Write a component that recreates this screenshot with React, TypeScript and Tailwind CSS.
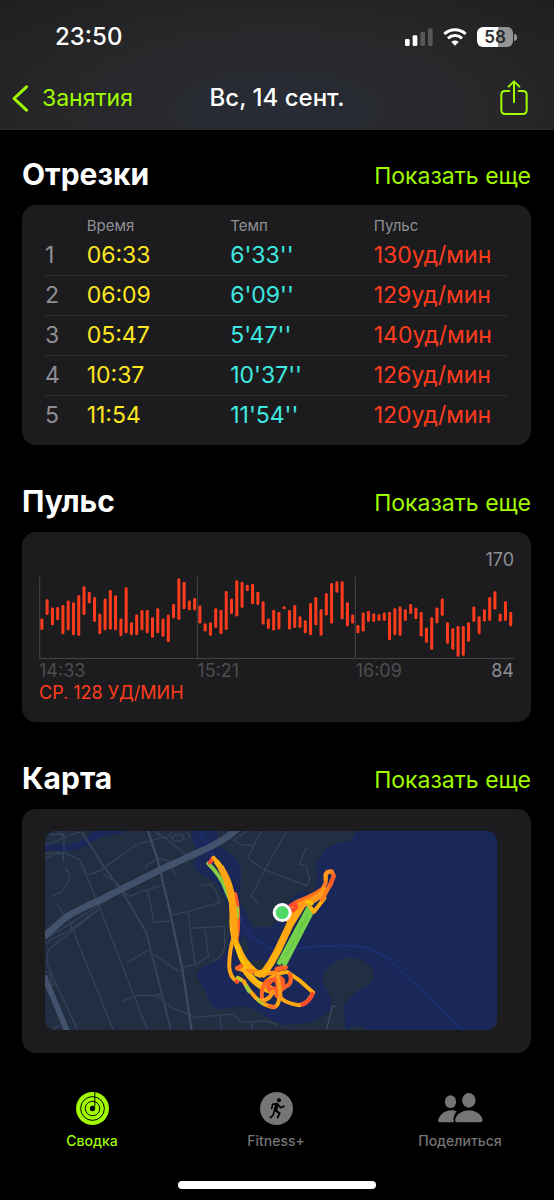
type Split = {
  time: string;
  pace: string;
  pulse: string;
};

const splits: Split[] = [
  { time: "06:33", pace: "6'33''", pulse: "130уд/мин" },
  { time: "06:09", pace: "6'09''", pulse: "129уд/мин" },
  { time: "05:47", pace: "5'47''", pulse: "140уд/мин" },
  { time: "10:37", pace: "10'37''", pulse: "126уд/мин" },
  { time: "11:54", pace: "11'54''", pulse: "120уд/мин" },
];

// top and bottom of each heart rate bar, in chart units
const pulseRanges = [
  [238, 272], [180, 227], [205, 258], [203, 243], [197, 285], [184, 273],
  [189, 288], [168, 290], [141, 227], [157, 192], [173, 248], [223, 285],
  [178, 273], [152, 271], [168, 273], [238, 291], [144, 282], [249, 288],
  [226, 288], [212, 273], [212, 282], [234, 296], [207, 282], [238, 293],
  [226, 309], [194, 237], [117, 242], [128, 210], [184, 213], [176, 213],
  [199, 253], [252, 277], [249, 290], [207, 266], [212, 285], [155, 272],
  [178, 224], [123, 232], [128, 206], [136, 155], [133, 195], [157, 197],
  [186, 256], [238, 269], [212, 274], [218, 271], [201, 210], [212, 271],
  [197, 266], [231, 266], [243, 282], [191, 288], [173, 258], [210, 290],
  [162, 229], [131, 253], [126, 160], [126, 240], [189, 261], [226, 253],
  [257, 282], [220, 277], [215, 248], [223, 248], [225, 245], [220, 245],
  [218, 303], [207, 288], [202, 290], [210, 245], [194, 224], [205, 240],
  [218, 292], [265, 311], [234, 332], [205, 252], [178, 230], [249, 314],
  [267, 332], [260, 353], [260, 350], [249, 308], [202, 248], [231, 285],
  [210, 247], [173, 245], [156, 211], [223, 247], [186, 245], [218, 261],
];

function StatusBar() {
  return (
    <div className="flex items-center justify-between pt-[22px] pr-[37px] pl-[55px] text-white">
      <span className="text-[24px] leading-[30px] font-medium">23:50</span>
      <div className="flex items-center gap-[10px]">
        <svg className="h-[18px] w-7" viewBox="0 0 84 54" aria-hidden="true">
          <rect x="0" y="33" width="14" height="21" rx="4" fill="#fff" />
          <rect x="23" y="22" width="14" height="32" rx="4" fill="#fff" />
          <rect x="46" y="12" width="14" height="42" rx="4" fill="#58585a" />
          <rect x="69" y="1" width="14" height="53" rx="4" fill="#58585a" />
        </svg>
        <svg className="h-[18px] w-6" viewBox="0 0 72 54" fill="none" aria-hidden="true">
          <path d="M4 18C22 1 50 1 68 18" stroke="#fff" strokeWidth="9" />
          <path d="M15 31C27 20 45 20 57 31" stroke="#fff" strokeWidth="9" />
          <path d="M25 42C31 36 41 36 47 42L36 53Z" fill="#fff" />
        </svg>
        <div className="flex items-center gap-px">
          <div className="h-5 w-9 rounded-md bg-linear-to-r from-white from-58% to-[#949495] to-58% text-center text-[17px] leading-5 font-semibold text-[#2a2a2c]">
            58
          </div>
          <div className="h-[7px] w-[3px] rounded-r-full bg-[#949495]" />
        </div>
      </div>
    </div>
  );
}

function Header() {
  return (
    <header className="h-[130px] border-b border-[#2c2c2e] bg-[radial-gradient(ellipse_at_50%_85%,#282c36_0%,#28282b_50%,#1f1f20_100%)]">
      <StatusBar />
      <div className="mt-[26px] grid grid-cols-[1fr_auto_1fr] items-center px-3">
        <button type="button" className="flex items-center gap-[14px] text-[23px] leading-10 text-[#a0fb00]">
          <svg className="h-[27px] w-4" viewBox="0 0 16 27" fill="none" aria-hidden="true">
            <path d="M14.500 1.800L2 13.500L14.500 25.200" stroke="currentColor" strokeWidth="3" strokeLinecap="round" strokeLinejoin="round" />
          </svg>
          Занятия
        </button>
        <h1 className="text-center text-[24px] leading-10 font-medium whitespace-nowrap text-white">
          Вс, 14 сент.
        </h1>
        <button type="button" aria-label="Поделиться" className="mr-[14px] justify-self-end text-[#a0fb00]">
          <svg className="h-9 w-7" viewBox="0 0 84 108" fill="none" stroke="currentColor" strokeWidth="6" strokeLinecap="round" strokeLinejoin="round" aria-hidden="true">
            <path d="M28 33H15Q4 33 4 44V91Q4 102 15 102H69Q80 102 80 91V44Q80 33 69 33H56" />
            <path d="M42 66V5M26 20L42 4L58 20" />
          </svg>
        </button>
      </div>
    </header>
  );
}

function SectionTitle({ title }: { title: string }) {
  return (
    <div className="mb-[11px] flex h-10 items-center justify-between">
      <h2 className="text-[30px] leading-10 font-bold text-white">{title}</h2>
      <button type="button" className="pt-1 text-[23px] leading-9 text-[#a0fb00]">
        Показать еще
      </button>
    </div>
  );
}

function SplitsCard() {
  return (
    <div className="rounded-[14px] bg-[#1c1c1e] px-[23px] pt-[11px] pb-[10px]">
      <table className="w-full table-fixed text-left">
        <thead>
          <tr className="h-[19px] text-[15px] leading-[19px] text-[#8e8e93]">
            <th className="w-[9%]" />
            <th className="w-[31%] font-normal">Время</th>
            <th className="w-[31%] font-normal">Темп</th>
            <th className="font-normal">Пульс</th>
          </tr>
        </thead>
        <tbody className="divide-y divide-[#2f2f31]">
          {splits.map((split, index) => (
            <tr key={split.time} className="h-10 text-[23px] leading-8">
              <td className="text-[#8e8e93]">{index + 1}</td>
              <td className="text-[#ffe620]">{split.time}</td>
              <td className="text-[#3ce8e0]">{split.pace}</td>
              <td className="whitespace-nowrap text-[#ff3b1d]">{split.pulse}</td>
            </tr>
          ))}
        </tbody>
      </table>
    </div>
  );
}

function PulseCard() {
  return (
    <div className="rounded-[14px] bg-[#1c1c1e] px-[17px] pt-[17px] pb-[18px] text-[18px] leading-[22px]">
      <p className="mb-[5px] text-right text-[#8e8e93]">170</p>
      <svg className="block w-full" viewBox="0 110 1428 252" aria-hidden="true">
        <path d="M2 112V358M476 112V358M951 112V358M1 358H1428" stroke="#454547" strokeWidth="3" fill="none" />
        {pulseRanges.map(([top, bottom], index) => (
          <rect
            key={index}
            x={4 + index * 15.84}
            y={top}
            width="9"
            height={bottom - top}
            rx="4"
            fill="#ff3b1d"
          />
        ))}
      </svg>
      <div className="grid grid-cols-3 text-[#4d4d50]">
        <span>14:33</span>
        <span>15:21</span>
        <span className="flex justify-between">
          16:09 <span className="text-[#8e8e93]">84</span>
        </span>
      </div>
      <p className="text-[#ff3b1d]">СР. 128 УД/МИН</p>
    </div>
  );
}

function RouteMap() {
  return (
    <svg className="block w-full rounded-[10px]" viewBox="75 78 1357 597" role="img" aria-label="Карта">
      <rect x="75" y="78" width="1357" height="597" fill="#222f42" />

      {/* water */}
      <g fill="#192859">
        <path d="M75 116C130 124 170 118 205 94L215 78H325C300 92 280 88 255 92C225 100 210 122 170 134C140 142 105 134 75 136Z" />
        <path d="M1432 78H1008L995 108L960 112L920 130L890 170L892 220L885 262L840 262L810 285L796 320L775 350L750 366H700L685 335L660 290L662 240L665 200C660 165 630 140 590 120L592 78H513L520 115L538 140L518 180C530 205 560 212 590 235C620 280 635 330 632 380C625 430 618 450 590 468C560 480 530 490 533 515C540 540 555 550 562 575C570 605 585 614 620 614C645 600 670 600 700 612L740 637L790 660L860 655L900 640L935 615L932 575L910 535C908 515 908 500 950 470C975 455 1010 455 1030 468C1050 480 1062 490 1062 515C1060 540 1025 545 1000 570C975 590 970 605 972 625L978 660L970 675H1432Z" />
      </g>
      <g fill="#222f42">
        <path d="M665 400Q675 392 681 410L684 440L672 452Q660 430 665 400Z" />
        <path d="M690 470Q710 462 738 468L735 495L700 500Z" />
        <path d="M990 675V664H1035V675Z" />
        <path d="M970 660L983 668L970 675Z" />
      </g>
      <path d="M545 78V95L590 165L625 210L650 300Q665 360 695 395L740 425L765 434L880 426L970 421L1042 428L1102 458L1328 675" fill="none" stroke="#1c3179" strokeWidth="4" />

      {/* roads */}
      <g fill="none" stroke="#33415a" strokeWidth="4" strokeLinejoin="round">
        <path d="M110 298L148 350L280 675" />
        <path d="M180 165L240 310L382 675" />
        <path d="M185 80L245 175L310 265L380 385L395 445L453 675" strokeWidth="6" />
        <path d="M75 145L128 142L180 165L200 208Q230 208 262 182L350 118L432 97L500 150" />
        <path d="M75 120L130 100L180 80M110 78L135 100M88 90L132 86V140M75 160L95 150M92 160Q105 140 130 148V170" />
        <path d="M135 190Q160 215 142 235L125 262L93 275" />
        <path d="M75 402L160 350L270 280L300 245L290 232L250 208" />
        <path d="M75 415L150 375L240 310L85 435L80 475L172 675" />
        <path d="M75 500L90 503L95 540L106 535M97 675L118 660" />
        <path d="M320 474L392 432" />
        <path d="M310 588L355 571L408 572L430 565M408 572L455 608L515 632" />
        <path d="M403 447Q440 480 482 500" />
        <path d="M310 262L330 274L355 264L432 240M383 256L403 353L455 347" />
        <path d="M455 330L505 320L606 291M505 320L510 370L526 478M510 370L614 364V430Q605 465 575 468M555 370L566 455L526 478L487 488" />
        <path d="M545 242L572 238Q590 255 598 292" />
        <path d="M376 194L382 178L420 160L462 172L500 150M440 170L468 208" />
        <path d="M408 84L440 100L455 82M455 98L465 90H488L492 100L485 108H462ZM405 78L425 92M500 80L512 98" />
        <path d="M515 638L642 628L660 652L740 648L775 660M600 630L605 675M697 652L698 675" />
        <path d="M724 78L683 160L735 195L800 78M735 195L860 243L870 225L858 182L838 178L860 128M735 195L696 272L716 298M683 78L640 105L660 118L698 122" />
        <path d="M920 675L938 604H948" stroke="#3f4c5e" />
      </g>
      <g fill="none" stroke="#43526c">
        <path d="M384 78L412 160L450 320L487 490L515 675" strokeWidth="7" stroke="#3b4963" />
        <path d="M70 396L140 335Q180 312 240 285L420 195L540 140Q610 110 652 72" strokeWidth="20" />
        <path d="M72 512L142 680" strokeWidth="17" />
      </g>

      {/* workout route, coloured by pace */}
      <g transform="translate(480 45)" fill="none" strokeLinecap="round" strokeLinejoin="round" strokeWidth="12">
        <path d="M85 130Q125 170 138 210L155 250" stroke="#86cf45" />
        <path d="M100 114L90 128" stroke="#ff4a2e" />
        <path d="M166 222Q178 270 174 330L168 375" stroke="#ff5a2a" />
        <path d="M172 265V292" stroke="#a4c93a" />
        <path d="M101 114Q128 140 146 180Q160 215 164 270Q170 320 162 350Q148 390 148 440Q150 472 172 485" stroke="#ffa514" />
        <path d="M112 128Q140 165 150 210Q160 260 157 300Q156 350 176 385Q195 435 240 465" stroke="#ffb20d" strokeWidth="17" />
        <path d="M124 145Q150 190 156 240L162 300L166 345" stroke="#ffa514" strokeWidth="20" />
        <path d="M170 380Q190 450 232 486Q250 496 270 502" stroke="#ffc107" />
        <path d="M172 445L195 452L225 455L262 460L290 458" stroke="#ff8a1c" strokeWidth="13" />
        <path d="M172 445L185 437" stroke="#ff6424" />
        <path d="M190 448Q215 490 260 512L290 520" stroke="#ffb20d" />
        <path d="M170 485L178 476L192 484" stroke="#ff4a2e" />
        <path d="M174 474L184 480" stroke="#c9c72a" />
        <path d="M192 486L206 508L228 534Q250 556 280 562Q298 560 298 530L306 490" stroke="#ffa514" />
        <path d="M200 500L208 514M236 540L246 548" stroke="#a4c93a" />
        <path d="M268 558L284 562" stroke="#ff7424" />
        <path d="M262 482Q290 460 322 456L362 484L400 518" stroke="#ffae12" />
        <path d="M262 482Q243 500 246 535" stroke="#ff6a26" />
        <path d="M400 518Q385 552 358 556Q320 552 300 532L270 500" stroke="#ffa514" />
        <path d="M398 522Q388 546 368 554" stroke="#ff4a2e" />
        <path d="M270 480Q258 505 276 516Q300 512 292 488Q282 470 272 486M290 470Q318 475 306 500Q294 520 280 505" stroke="#ff5f26" strokeWidth="13" />
        <path d="M330 462Q340 490 318 500Q300 510 290 528" stroke="#ff6424" />
        <path d="M246 542Q272 540 278 515M290 455L296 478L302 530" stroke="#ff9a1a" />
        <path d="M250 462Q275 430 292 395L330 315L365 258" stroke="#ffa80f" strokeWidth="22" />
        <path d="M230 462L262 452L300 385" stroke="#ffb20d" strokeWidth="15" />
        <path d="M292 448L316 442" stroke="#ff6424" strokeWidth="16" />
        <path d="M299 428L388 262M315 430L394 278" stroke="#74d14b" strokeWidth="15" />
        <path d="M318 408L342 366M352 345L384 284" stroke="#55ae46" strokeWidth="2" />
        <path d="M392 262L402 276L434 234" stroke="#ffae12" />
        <path d="M325 300L340 276L350 262" stroke="#ffa514" strokeWidth="16" />
        <path d="M334 258L352 246L382 234L410 220L428 208" stroke="#ff7020" strokeWidth="14" />
        <path d="M345 264L362 256L400 240L430 220" stroke="#ff9a1a" strokeWidth="20" />
        <path d="M333 256L345 251L350 262L340 272" stroke="#ff4a2e" />
        <path d="M428 208L438 188L437 165L442 156L456 154L462 168L452 192L436 222L426 240" stroke="#ff7a20" />
        <path d="M438 178V162L448 155M432 206L424 222" stroke="#ff9a1a" />
        <path d="M462 168L452 196" stroke="#ff5a2a" />
        <path d="M382 246L396 250" stroke="#ffc107" />
      </g>
      <circle cx="787" cy="323" r="24" fill="#4fd964" stroke="#fff" strokeWidth="9" />
    </svg>
  );
}

function RingsIcon() {
  return (
    <svg className="h-[33px] w-[33px]" viewBox="-50 -50 100 100" aria-hidden="true">
      <circle r="50" fill="#a0fb00" />
      <g fill="none" stroke="#000" strokeWidth="3">
        <circle r="36" />
        <circle r="22" />
        <path d="M7 -50V-6" />
      </g>
      <circle r="8" fill="#000" />
    </svg>
  );
}

function RunnerIcon() {
  return (
    <svg className="h-[33px] w-[33px]" viewBox="0 0 99 99" fill="none" aria-hidden="true">
      <circle cx="49.500" cy="49.500" r="49.500" fill="#757575" />
      <circle cx="57" cy="25" r="6" fill="#000" />
      <g stroke="#000" strokeLinecap="round" strokeLinejoin="round">
        <path d="M51 38L46 54" strokeWidth="11" />
        <path d="M50 35L38 37L35 49M54 38L62 47L72 43" strokeWidth="5" />
        <path d="M48 56L59 64L53 76" strokeWidth="6" />
        <path d="M43 58L39 70L31 77" strokeWidth="5" />
      </g>
    </svg>
  );
}

function PeopleIcon() {
  return (
    <svg className="h-[30px] w-[45px]" viewBox="0 0 134 90" fill="#757575" aria-hidden="true">
      <ellipse cx="37" cy="26" rx="17" ry="19" />
      <ellipse cx="92" cy="22" rx="20" ry="22" />
      <path d="M56 55C44 49 23 50 11 63C3 71 0 78 0 83Q0 88 6 88H47C44 76 47 64 56 55Z" />
      <path d="M92 52C72 52 51 66 51 82Q51 88 57 88H127Q133 88 133 82C133 66 112 52 92 52Z" />
    </svg>
  );
}

function TabBar() {
  return (
    <nav className="mt-[38px] grid grid-cols-3 pr-[2px] text-[14px] leading-5 font-medium text-[#757575]">
      <a href="#summary" className="flex flex-col items-center gap-[5px] text-[#a0fb00]">
        <span className="flex h-[35px] items-center">
          <RingsIcon />
        </span>
        Сводка
      </a>
      <a href="#fitness" className="flex flex-col items-center gap-[5px]">
        <span className="flex h-[35px] items-center">
          <RunnerIcon />
        </span>
        Fitness+
      </a>
      <a href="#share" className="flex flex-col items-center gap-[5px]">
        <span className="flex h-[35px] items-center">
          <PeopleIcon />
        </span>
        Поделиться
      </a>
    </nav>
  );
}

export default function App() {
  return (
    <div className="min-h-screen bg-black pb-[11px] font-['Inter',sans-serif]">
      <Header />
      <main className="flex flex-col gap-9 pt-6 pr-[23px] pl-[22px]">
        <section>
          <SectionTitle title="Отрезки" />
          <SplitsCard />
        </section>
        <section>
          <SectionTitle title="Пульс" />
          <PulseCard />
        </section>
        <section>
          <SectionTitle title="Карта" />
          <div className="rounded-[14px] bg-[#1c1c1e] pt-[22px] pr-[34px] pb-[23px] pl-[23px]">
            <RouteMap />
          </div>
        </section>
      </main>
      <TabBar />
      <div className="mx-auto mt-[30px] h-2 w-[198px] rounded-full bg-white" />
    </div>
  );
}
